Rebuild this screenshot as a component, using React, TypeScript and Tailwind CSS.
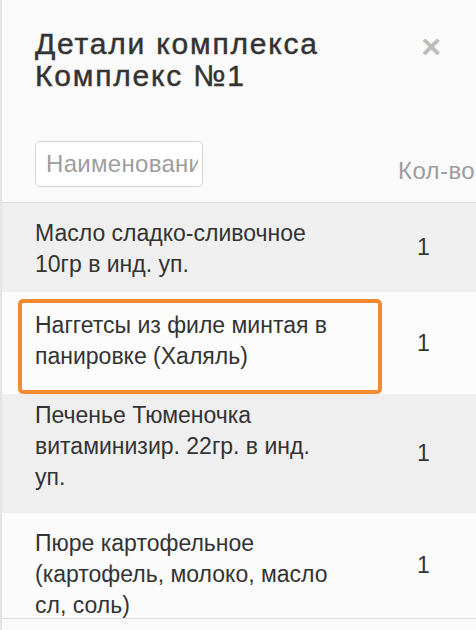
import React from "react";

type Item = { name: string; qty: number; row: string; cell: string };

const items: Item[] = [
  {
    name: "Масло сладко-сливочное 10гр в инд. уп.",
    qty: 1,
    row: "bg-[#efefef]",
    cell: "pl-[17px] pr-[40px] pt-[15px] pb-[12px]",
  },
  {
    name: "Наггетсы из филе минтая в панировке (Халяль)",
    qty: 1,
    row: "bg-[#fcfcfc]",
    cell: "mt-[7px] pl-[13px] pr-[36px] pt-[7px] pb-[18px] border-4 border-[#f58a32] rounded-[5px]",
  },
  {
    name: "Печенье Тюменочка витаминизир. 22гр. в инд. уп.",
    qty: 1,
    row: "bg-[#efefef]",
    cell: "pl-[17px] pr-[40px] pt-[6px] pb-[20px]",
  },
  {
    name: "Пюре картофельное (картофель, молоко, масло сл, соль)",
    qty: 1,
    row: "bg-[#fbfbfb] h-[106px] border-b border-[#dcdcdc]",
    cell: "pl-[17px] pr-[40px] pt-[15px]",
  },
];

export default function App() {
  return (
    <div
      className="w-[476px] h-[630px] overflow-hidden bg-[#fafafa] border-l-2 border-[#e4e4e4] text-[#333]"
      style={{ fontFamily: '"Liberation Sans", Arial, sans-serif' }}
    >
      {/* Header */}
      <div className="flex items-start justify-between pl-[33px] pr-[35px] pt-[28px]">
        <h2 className="flex flex-col text-[30px] tracking-[1.8px] text-[#333] [-webkit-text-stroke:0.45px_#333]">
          <span className="block h-[32px] leading-[32px]">Детали комплекса</span>
          <span className="block h-[32px] leading-[32px]">Комплекс №1</span>
        </h2>
        <span className="mt-[1px] text-[34px] leading-none font-bold text-[#bcbcbc] cursor-pointer">×</span>
      </div>

      {/* Table head */}
      <div className="flex items-end mt-[49px] pb-[15px] border-b border-[#dcdcdc]">
        <div className="w-[364px] ml-[16px] pl-[17px]">
          <input
            className="block w-[168px] h-[46px] rounded-[5px] border border-[#d4d4d4] bg-white pl-[10px] pr-[4px] text-[24px] tracking-[0.3px] placeholder:text-[#9d9d9d] outline-none"
            placeholder="Наименование"
          />
        </div>
        <div className="pl-[16px] pb-[4px] text-[24px] tracking-[0.4px] leading-none text-[#9d9d9d] whitespace-nowrap">
          Кол-во
        </div>
      </div>

      {/* Rows */}
      {items.map((it, i) => (
        <div key={i} className={it.row + " flex items-start"}>
          <div className={"w-[364px] ml-[16px] shrink-0 " + it.cell}>
            <div className="text-[23px] leading-[31px]">{it.name}</div>
          </div>
          <div className="self-center pl-[35px] text-[23px]">{it.qty}</div>
        </div>
      ))}
    </div>
  );
}
